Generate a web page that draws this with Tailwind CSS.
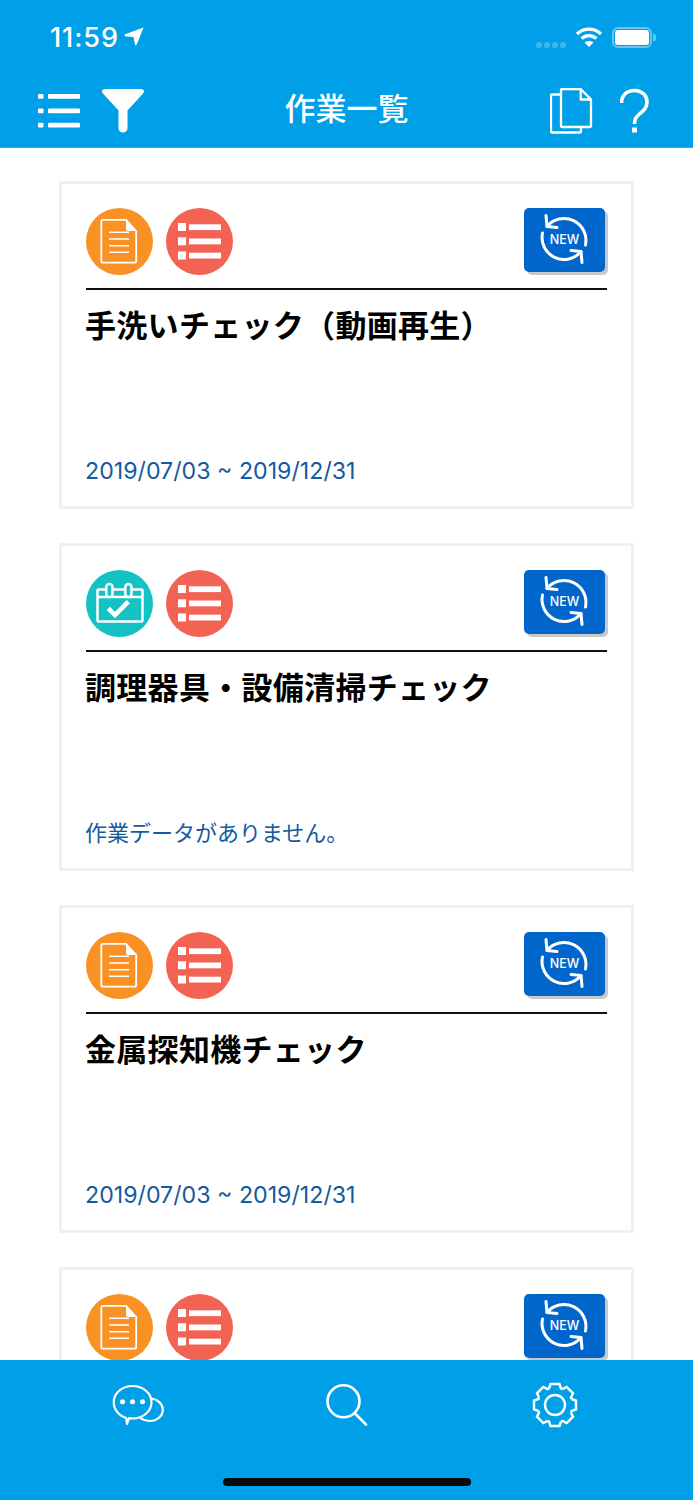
<!DOCTYPE html>
<html lang="ja">
<head>
<meta charset="utf-8">
<script src="https://cdn.jsdelivr.net/npm/@tailwindcss/browser@4"></script>
</head>
<body class="bg-white">
<div class="w-[693px] h-[1500px] flex flex-col overflow-hidden font-['Inter','Noto_Sans_CJK_JP',sans-serif]">
  <header class="h-[148px] shrink-0 bg-[#00a0e9] border-b border-[#2db0ee] text-white">
    <div class="h-[74px] flex items-center justify-between pl-[50px] pr-[41px]">
      <div class="flex items-center gap-[5px]">
        <span class="text-[27px] font-medium leading-none tracking-[0.9px]">11:59</span>
        <svg width="20" height="20" viewBox="0 0 20 20"><path d="M19.500 .5 L.5 7.500 Q0 9 2 9.500 L9.500 10 L11 17.500 Q12 19 13 17 Z" fill="#fff"/></svg>
      </div>
      <div class="flex items-center">
        <div class="flex gap-[2px] mt-[16px] mr-[9px]">
          <span class="w-[6px] h-[6px] rounded-full bg-white/25"></span><span class="w-[6px] h-[6px] rounded-full bg-white/25"></span><span class="w-[6px] h-[6px] rounded-full bg-white/25"></span><span class="w-[6px] h-[6px] rounded-full bg-white/25"></span>
        </div>
        <svg width="28" height="22" viewBox="0 0 28 22" class="mr-[9px]" fill="none" stroke="#fff" stroke-width="3.400">
          <path d="M2 8 C9 1.500 19 1.500 26 8"/><path d="M6.600 12.600 C11 8.600 17 8.600 21.400 12.600"/><path d="M14 21 L9.600 16.400 C12 14.400 16 14.400 18.400 16.400 Z" fill="#fff" stroke="none"/>
        </svg>
        <div class="relative w-[40px] h-[21px] rounded-[6px] border-2 border-white/40 p-[1px]">
          <div class="w-full h-full rounded-[3px] bg-white"></div>
          <div class="absolute right-[-6px] top-[5px] w-[3px] h-[7px] rounded-r-[2px] bg-white/40"></div>
        </div>
      </div>
    </div>
    <div class="h-[73px] grid grid-cols-3 items-center px-[38px]">
      <div class="flex items-center gap-[21px]">
        <svg width="43" height="46" viewBox="38 88 43 46" fill="#fff">
          <rect x="38" y="94" width="5.500" height="4.800" rx="1"/><rect x="38" y="108.400" width="5.500" height="4.800" rx="1"/><rect x="38" y="122.700" width="5.500" height="4.800" rx="1"/>
          <rect x="48" y="94" width="32" height="4.800" rx="1"/><rect x="48" y="108.400" width="32" height="4.800" rx="1"/><rect x="48" y="122.700" width="32" height="4.800" rx="1"/>
        </svg>
        <svg width="43" height="46" viewBox="102 88 43 46" fill="#fff"><path d="M105 89 H141 C144 89 145 91.500 143 93.500 L127.500 110.500 V128 C127.500 134 118.500 134 118.500 128 V110.500 L103 93.500 C101 91.500 102 89 105 89 Z"/></svg>
      </div>
      <h1 class="text-center text-[31px] leading-[44px] font-medium whitespace-nowrap font-['Noto_Sans_CJK_JP',sans-serif] -mt-[8px]">作業一覧</h1>
      <div class="flex items-center justify-end gap-[27px] pr-[5px]">
        <svg width="43" height="46" viewBox="550 88 43 46" fill="none" stroke="#fff" stroke-width="2.300" stroke-linejoin="round">
          <path d="M560.700 94.500 H552 Q551 94.500 551 95.500 V131 Q551 132.500 552 132.500 H580 Q581 132.500 581 131 V127"/>
          <path d="M562 89 H580.700 L591 99.500 V126 Q591 127 590 127 H562 Q561 127 561 126 V90 Q561 89 562 89 Z"/>
          <path d="M580.700 89 V99.500 H591"/>
        </svg>
        <svg width="30" height="46" viewBox="620 88 30 46" fill="none" stroke="#fff" stroke-width="3.600">
          <path d="M621.500 103 C621.500 95 627 90.500 634.500 90.500 C642 90.500 647 95.500 647 102 C647 108 643.500 110.500 640 113.500 C636 117 634.500 119 634.500 124"/>
          <rect x="632" y="127.500" width="5" height="5" fill="#fff" stroke="none"/>
        </svg>
      </div>
    </div>
  </header>

  <main class="flex-1 min-h-0 overflow-hidden pt-[33px] pl-[59px] flex flex-col gap-[34px]">
    <!-- card 1 -->
    <article class="w-[575px] h-[328px] shrink-0 border-[3px] border-[#f0f0f2] px-[24px] pt-[24px] pb-[20px] flex flex-col">
      <div class="h-[80px] shrink-0 flex items-start justify-between pr-[2px]">
        <div class="flex gap-[13px]">
          <svg width="67" height="67" viewBox="0 0 67 67"><circle cx="33.500" cy="33.500" r="33.500" fill="#f99125"/><path d="M17 11.800 H40 L50.200 23 V53 Q50.200 54.700 48.500 54.700 H17 Q15.300 54.700 15.300 53 V13.500 Q15.300 11.800 17 11.800 Z" fill="none" stroke="#fff" stroke-width="1.800"/><path d="M40 11.800 L50.200 23 H42 Q40 23 40 21 Z" fill="#fff"/><path d="M23 24.300 H43 M23 31 H43 M23 37.700 H43 M23 44.300 H43" stroke="#fff" stroke-width="1.600"/></svg>
          <svg width="67" height="67" viewBox="0 0 67 67" fill="#fff"><circle cx="33.500" cy="33.500" r="33.500" fill="#f26354"/><rect x="12" y="15" width="8" height="8"/><rect x="12" y="29.300" width="8" height="8"/><rect x="12" y="43.500" width="8" height="8"/><rect x="23" y="16.300" width="32" height="5.800"/><rect x="23" y="30.500" width="32" height="5.800"/><rect x="23" y="44.700" width="32" height="5.800"/></svg>
        </div>
        <button class="relative w-[81px] h-[64px] rounded-[5px] bg-[#0066cc] shadow-[3px_3px_0_#c9c9c9] text-white">
          <svg class="absolute inset-0" width="81" height="64" viewBox="0 0 81 64" fill="none" stroke="#fff" stroke-width="3" stroke-linecap="round" stroke-linejoin="round">
            <path d="M23 18.500 A22 22 0 0 1 61.500 37"/><path d="M22 7.500 L23 18.500 L33 19.500"/>
            <path d="M18.500 25 A22 22 0 0 0 57 43.500"/><path d="M58 54.500 L57 43.500 L47 42.500"/>
          </svg>
          <span class="relative block text-[12.500px] font-medium leading-none text-center">NEW</span>
        </button>
      </div>
      <div class="h-[2px] shrink-0 bg-[#111]"></div>
      <h2 class="mt-[14px] -ml-[1px] text-[31px] tracking-[0.3px] leading-[40px] font-bold text-black whitespace-nowrap font-['Noto_Sans_CJK_JP',sans-serif]">手洗いチェック（動画再生）</h2>
      <p class="mt-auto -ml-[1px] text-[23.200px] leading-[30px] text-[#155a9e] whitespace-nowrap">2019/07/03 ~ 2019/12/31</p>
    </article>
    <!-- card 2 -->
    <article class="w-[575px] h-[328px] shrink-0 border-[3px] border-[#f0f0f2] px-[24px] pt-[24px] pb-[20px] flex flex-col">
      <div class="h-[80px] shrink-0 flex items-start justify-between pr-[2px]">
        <div class="flex gap-[13px]">
          <svg width="67" height="67" viewBox="0 0 67 67"><circle cx="33.500" cy="33.500" r="33.500" fill="#14c2c4"/><path d="M12.500 19.500 H55.500 Q56.500 19.500 56.500 20.500 V50.500 Q56.500 51.500 55.500 51.500 H12.500 Q11.500 51.500 11.500 50.500 V20.500 Q11.500 19.500 12.500 19.500 Z" fill="none" stroke="#fff" stroke-width="2.500"/><path d="M11.500 27 H56.500" stroke="#fff" stroke-width="2.500"/><rect x="20.300" y="14" width="6.200" height="13" rx="3.100" fill="#14c2c4" stroke="#fff" stroke-width="2.500"/><rect x="39.300" y="14" width="6.200" height="13" rx="3.100" fill="#14c2c4" stroke="#fff" stroke-width="2.500"/><path d="M22.300 38.300 L29 45 L42.300 31.700" fill="none" stroke="#fff" stroke-width="4.500"/></svg>
          <svg width="67" height="67" viewBox="0 0 67 67" fill="#fff"><circle cx="33.500" cy="33.500" r="33.500" fill="#f26354"/><rect x="12" y="15" width="8" height="8"/><rect x="12" y="29.300" width="8" height="8"/><rect x="12" y="43.500" width="8" height="8"/><rect x="23" y="16.300" width="32" height="5.800"/><rect x="23" y="30.500" width="32" height="5.800"/><rect x="23" y="44.700" width="32" height="5.800"/></svg>
        </div>
        <button class="relative w-[81px] h-[64px] rounded-[5px] bg-[#0066cc] shadow-[3px_3px_0_#c9c9c9] text-white">
          <svg class="absolute inset-0" width="81" height="64" viewBox="0 0 81 64" fill="none" stroke="#fff" stroke-width="3" stroke-linecap="round" stroke-linejoin="round">
            <path d="M23 18.500 A22 22 0 0 1 61.500 37"/><path d="M22 7.500 L23 18.500 L33 19.500"/>
            <path d="M18.500 25 A22 22 0 0 0 57 43.500"/><path d="M58 54.500 L57 43.500 L47 42.500"/>
          </svg>
          <span class="relative block text-[12.500px] font-medium leading-none text-center">NEW</span>
        </button>
      </div>
      <div class="h-[2px] shrink-0 bg-[#111]"></div>
      <h2 class="mt-[14px] -ml-[1px] text-[31px] tracking-[0.3px] leading-[40px] font-bold text-black whitespace-nowrap font-['Noto_Sans_CJK_JP',sans-serif]">調理器具・設備清掃チェック</h2>
      <p class="mt-auto mb-[2px] -ml-[1px] text-[22px] leading-[30px] text-[#155a9e] whitespace-nowrap font-['Noto_Sans_CJK_JP',sans-serif]">作業データがありません。</p>
    </article>
    <!-- card 3 -->
    <article class="w-[575px] h-[328px] shrink-0 border-[3px] border-[#f0f0f2] px-[24px] pt-[24px] pb-[20px] flex flex-col">
      <div class="h-[80px] shrink-0 flex items-start justify-between pr-[2px]">
        <div class="flex gap-[13px]">
          <svg width="67" height="67" viewBox="0 0 67 67"><circle cx="33.500" cy="33.500" r="33.500" fill="#f99125"/><path d="M17 11.800 H40 L50.200 23 V53 Q50.200 54.700 48.500 54.700 H17 Q15.300 54.700 15.300 53 V13.500 Q15.300 11.800 17 11.800 Z" fill="none" stroke="#fff" stroke-width="1.800"/><path d="M40 11.800 L50.200 23 H42 Q40 23 40 21 Z" fill="#fff"/><path d="M23 24.300 H43 M23 31 H43 M23 37.700 H43 M23 44.300 H43" stroke="#fff" stroke-width="1.600"/></svg>
          <svg width="67" height="67" viewBox="0 0 67 67" fill="#fff"><circle cx="33.500" cy="33.500" r="33.500" fill="#f26354"/><rect x="12" y="15" width="8" height="8"/><rect x="12" y="29.300" width="8" height="8"/><rect x="12" y="43.500" width="8" height="8"/><rect x="23" y="16.300" width="32" height="5.800"/><rect x="23" y="30.500" width="32" height="5.800"/><rect x="23" y="44.700" width="32" height="5.800"/></svg>
        </div>
        <button class="relative w-[81px] h-[64px] rounded-[5px] bg-[#0066cc] shadow-[3px_3px_0_#c9c9c9] text-white">
          <svg class="absolute inset-0" width="81" height="64" viewBox="0 0 81 64" fill="none" stroke="#fff" stroke-width="3" stroke-linecap="round" stroke-linejoin="round">
            <path d="M23 18.500 A22 22 0 0 1 61.500 37"/><path d="M22 7.500 L23 18.500 L33 19.500"/>
            <path d="M18.500 25 A22 22 0 0 0 57 43.500"/><path d="M58 54.500 L57 43.500 L47 42.500"/>
          </svg>
          <span class="relative block text-[12.500px] font-medium leading-none text-center">NEW</span>
        </button>
      </div>
      <div class="h-[2px] shrink-0 bg-[#111]"></div>
      <h2 class="mt-[14px] -ml-[1px] text-[31px] tracking-[0.3px] leading-[40px] font-bold text-black whitespace-nowrap font-['Noto_Sans_CJK_JP',sans-serif]">金属探知機チェック</h2>
      <p class="mt-auto -ml-[1px] text-[23.200px] leading-[30px] text-[#155a9e] whitespace-nowrap">2019/07/03 ~ 2019/12/31</p>
    </article>
    <!-- card 4 -->
    <article class="w-[575px] h-[328px] shrink-0 border-[3px] border-[#f0f0f2] px-[24px] pt-[24px] pb-[20px] flex flex-col">
      <div class="h-[80px] shrink-0 flex items-start justify-between pr-[2px]">
        <div class="flex gap-[13px]">
          <svg width="67" height="67" viewBox="0 0 67 67"><circle cx="33.500" cy="33.500" r="33.500" fill="#f99125"/><path d="M17 11.800 H40 L50.200 23 V53 Q50.200 54.700 48.500 54.700 H17 Q15.300 54.700 15.300 53 V13.500 Q15.300 11.800 17 11.800 Z" fill="none" stroke="#fff" stroke-width="1.800"/><path d="M40 11.800 L50.200 23 H42 Q40 23 40 21 Z" fill="#fff"/><path d="M23 24.300 H43 M23 31 H43 M23 37.700 H43 M23 44.300 H43" stroke="#fff" stroke-width="1.600"/></svg>
          <svg width="67" height="67" viewBox="0 0 67 67" fill="#fff"><circle cx="33.500" cy="33.500" r="33.500" fill="#f26354"/><rect x="12" y="15" width="8" height="8"/><rect x="12" y="29.300" width="8" height="8"/><rect x="12" y="43.500" width="8" height="8"/><rect x="23" y="16.300" width="32" height="5.800"/><rect x="23" y="30.500" width="32" height="5.800"/><rect x="23" y="44.700" width="32" height="5.800"/></svg>
        </div>
        <button class="relative w-[81px] h-[64px] rounded-[5px] bg-[#0066cc] shadow-[3px_3px_0_#c9c9c9] text-white">
          <svg class="absolute inset-0" width="81" height="64" viewBox="0 0 81 64" fill="none" stroke="#fff" stroke-width="3" stroke-linecap="round" stroke-linejoin="round">
            <path d="M23 18.500 A22 22 0 0 1 61.500 37"/><path d="M22 7.500 L23 18.500 L33 19.500"/>
            <path d="M18.500 25 A22 22 0 0 0 57 43.500"/><path d="M58 54.500 L57 43.500 L47 42.500"/>
          </svg>
          <span class="relative block text-[12.500px] font-medium leading-none text-center">NEW</span>
        </button>
      </div>
    </article>
  </main>

  <footer class="h-[140px] shrink-0 bg-[#00a0e9] flex flex-col items-center">
    <div class="w-full h-[118px] shrink-0 flex items-start pt-[22px]">
      <div class="w-[277px] flex justify-center">
        <svg width="54" height="46" viewBox="112 1383 54 46" fill="none" stroke="#fff" stroke-width="2.200" stroke-linejoin="round">
          <path d="M132.500 1387 C143 1387 151.500 1394.300 151.500 1403.300 C151.500 1412.300 143 1419.500 132.500 1419.500 C131 1419.500 130 1419.400 129 1419.200 L127 1425 L126.200 1419 C119 1416.800 113.700 1410.700 113.700 1403.300 C113.700 1394.300 122 1387 132.500 1387 Z"/>
          <path d="M151 1399.500 C157.500 1400 162.800 1405 162.800 1410.700 C162.800 1417 157 1422 149.700 1422 C146 1422 142.700 1420.700 140 1418.800"/>
          <g fill="#fff" stroke="none"><circle cx="122.500" cy="1402.800" r="2.500"/><circle cx="132.500" cy="1402.800" r="2.500"/><circle cx="142.500" cy="1402.800" r="2.500"/></g>
        </svg>
      </div>
      <div class="w-[139px] flex justify-center">
        <svg width="44" height="46" viewBox="325 1383 44 46" fill="none" stroke="#fff" stroke-width="2.600" stroke-linecap="round">
          <circle cx="343.500" cy="1402.300" r="16"/><path d="M354.500 1414 L366 1425.500"/>
        </svg>
      </div>
      <div class="w-[277px] flex justify-center">
        <svg width="46" height="46" viewBox="-23 -23 46 46" fill="none" stroke="#fff" stroke-width="2.400">
          <circle r="10"/>
          <path d="M-6 -16.500L-4.500 -21L4.500 -21L6 -16.500L7.420 -15.900"/>
          <path transform="rotate(45)" d="M-6 -16.500L-4.500 -21L4.500 -21L6 -16.500L7.420 -15.900"/>
          <path transform="rotate(90)" d="M-6 -16.500L-4.500 -21L4.500 -21L6 -16.500L7.420 -15.900"/>
          <path transform="rotate(135)" d="M-6 -16.500L-4.500 -21L4.500 -21L6 -16.500L7.420 -15.900"/>
          <path transform="rotate(180)" d="M-6 -16.500L-4.500 -21L4.500 -21L6 -16.500L7.420 -15.900"/>
          <path transform="rotate(225)" d="M-6 -16.500L-4.500 -21L4.500 -21L6 -16.500L7.420 -15.900"/>
          <path transform="rotate(270)" d="M-6 -16.500L-4.500 -21L4.500 -21L6 -16.500L7.420 -15.900"/>
          <path transform="rotate(315)" d="M-6 -16.500L-4.500 -21L4.500 -21L6 -16.500L7.420 -15.900"/>
        </svg>
      </div>
    </div>
    <div class="w-[248px] h-[8px] rounded-full bg-[#0b0b0b]"></div>
  </footer>
</div>
</body>
</html>
